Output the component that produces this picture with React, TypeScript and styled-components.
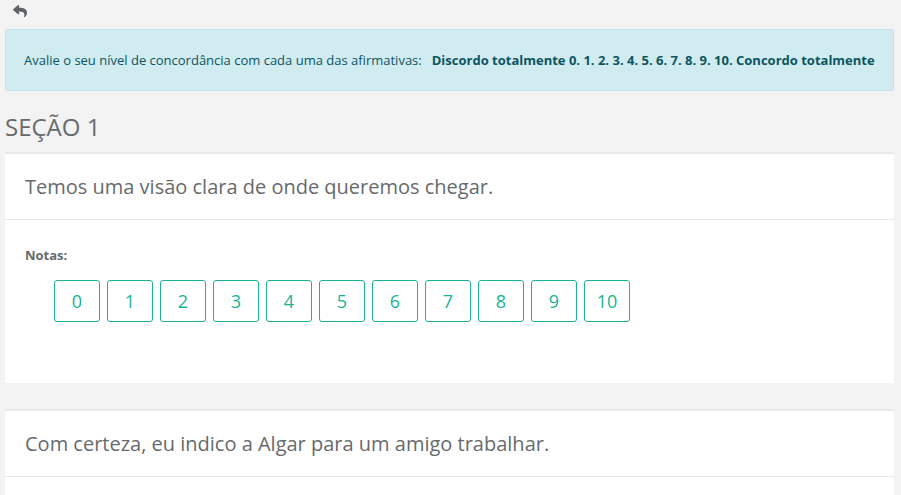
import styled, { createGlobalStyle } from 'styled-components';
import { FaReply } from 'react-icons/fa';

const GlobalStyle = createGlobalStyle`
  body {
    margin: 0;
    background: #f3f3f4;
    font-family: 'Open Sans', 'Liberation Sans', sans-serif;
    color: #676a6c;
  }
`;

const questions = [
  'Temos uma visão clara de onde queremos chegar.',
  'Com certeza, eu indico a Algar para um amigo trabalhar.',
];

const grades = [0, 1, 2, 3, 4, 5, 6, 7, 8, 9, 10];

export default function App() {
  return (
    <>
      <GlobalStyle />
      <S.Page>
        <S.BackButton aria-label="Voltar">
          <FaReply size={14} />
        </S.BackButton>
        <S.Alert>
          Avalie o seu nível de concordância com cada uma das afirmativas:
          <S.Strong>Discordo totalmente 0. 1. 2. 3. 4. 5. 6. 7. 8. 9. 10. Concordo totalmente</S.Strong>
        </S.Alert>
        <S.SectionTitle>SEÇÃO 1</S.SectionTitle>
        <S.List>
          {questions.map((q) => (
            <S.Card key={q}>
              <S.CardTitle>{q}</S.CardTitle>
              <S.CardBody>
                <S.Label>Notas:</S.Label>
                <S.Grades>
                  {grades.map((g) => (
                    <S.Grade key={g}>{g}</S.Grade>
                  ))}
                </S.Grades>
              </S.CardBody>
            </S.Card>
          ))}
        </S.List>
      </S.Page>
    </>
  );
}

const Page = styled.div`
  padding: 0 7px 0 5px;
`;

const BackButton = styled.button`
  display: flex;
  align-items: center;
  height: 24px;
  padding: 0 0 2px 8px;
  margin-bottom: 5px;
  background: none;
  border: none;
  color: #5e6466;
  cursor: pointer;
`;

const Alert = styled.div`
  background: #d1ecf1;
  border: 1px solid #bee5eb;
  border-radius: 3px;
  color: #0c5460;
  font-size: 13px;
  line-height: 20px;
  padding: 20px 18px;
  white-space: nowrap;
`;

const Strong = styled.b`
  font-weight: 700;
  margin-left: 10px;
`;

const SectionTitle = styled.h2`
  margin: 0;
  padding: 21px 0 10px;
  font-size: 24px;
  line-height: 30px;
  font-weight: 400;
  color: #676a6c;
`;

const List = styled.div`
  display: flex;
  flex-direction: column;
  gap: 26px;
`;

const Card = styled.div`
  background: #fff;
  border-top: 2px solid #e7eaec;
`;

const CardTitle = styled.div`
  font-size: 20px;
  line-height: 24px;
  padding: 21px 20px 20px;
  border-bottom: 1px solid #e7eaec;
`;

const CardBody = styled.div`
  padding: 26px 20px 61px;
`;

const Label = styled.div`
  font-size: 13px;
  line-height: 18px;
  font-weight: 700;
  margin-bottom: 16px;
`;

const Grades = styled.div`
  display: flex;
  gap: 7px;
  margin-left: 29px;
`;

const Grade = styled.button`
  width: 46px;
  height: 42px;
  padding: 0;
  background: #fff;
  border: 1px solid #1ab394;
  border-radius: 3px;
  color: #1ab394;
  font-family: 'Open Sans', 'Liberation Sans', sans-serif;
  font-size: 18px;
  cursor: pointer;
`;

const S = {
  Page,
  BackButton,
  Alert,
  Strong,
  SectionTitle,
  List,
  Card,
  CardTitle,
  CardBody,
  Label,
  Grades,
  Grade,
};
